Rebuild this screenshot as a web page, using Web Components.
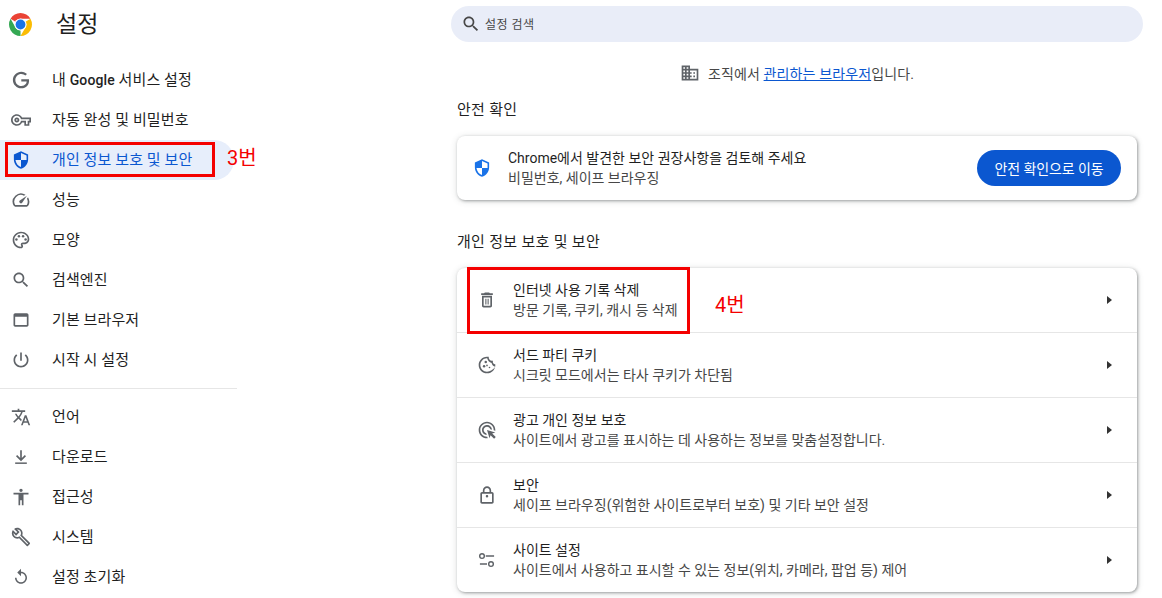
<!DOCTYPE html>
<html lang="ko">
<head>
<meta charset="utf-8">
<title>설정</title>
<style>
  html, body { margin: 0; padding: 0; background: #fff; }
  body { font-family: Roboto, "Noto Sans CJK KR", sans-serif; color: #1f1f1f; overflow: hidden; }
</style>
</head>
<body>
<settings-page>
  <settings-nav slot="nav">
    <nav-item icon="google">내 <span style="font-size:14px;font-weight:500">Google</span> 서비스 설정</nav-item>
    <nav-item icon="key">자동 완성 및 비밀번호</nav-item>
    <nav-item icon="shield" selected>개인 정보 보호 및 보안</nav-item>
    <nav-item icon="speed">성능</nav-item>
    <nav-item icon="palette">모양</nav-item>
    <nav-item icon="search">검색엔진</nav-item>
    <nav-item icon="browser">기본 브라우저</nav-item>
    <nav-item icon="power">시작 시 설정</nav-item>
    <nav-sep></nav-sep>
    <nav-item icon="translate">언어</nav-item>
    <nav-item icon="download">다운로드</nav-item>
    <nav-item icon="accessibility">접근성</nav-item>
    <nav-item icon="wrench">시스템</nav-item>
    <nav-item icon="restore">설정 초기화</nav-item>
  </settings-nav>

  <search-box placeholder="설정 검색"></search-box>
  <managed-note>조직에서 <a href="#" style="color:#0b57d0">관리하는 브라우저</a>입니다.</managed-note>

  <section-title style="--title-top:16px">안전 확인</section-title>
  <settings-card>
    <safety-row title="Chrome에서 발견한 보안 권장사항을 검토해 주세요" sub="비밀번호, 세이프 브라우징" action="안전 확인으로 이동"></safety-row>
  </settings-card>

  <section-title style="--title-top:32px">개인 정보 보호 및 보안</section-title>
  <settings-card>
    <link-row icon="trash" title="인터넷 사용 기록 삭제" sub="방문 기록, 쿠키, 캐시 등 삭제"></link-row>
    <link-row icon="cookie" title="서드 파티 쿠키" sub="시크릿 모드에서는 타사 쿠키가 차단됨"></link-row>
    <link-row icon="ads" title="광고 개인 정보 보호" sub="사이트에서 광고를 표시하는 데 사용하는 정보를 맞춤설정합니다."></link-row>
    <link-row icon="lock" title="보안" sub="세이프 브라우징(위험한 사이트로부터 보호) 및 기타 보안 설정"></link-row>
    <link-row icon="tune" title="사이트 설정" sub="사이트에서 사용하고 표시할 수 있는 정보(위치, 카메라, 팝업 등) 제어"></link-row>
  </settings-card>

  <red-mark slot="marks" label="3번" style="--x:5px;--y:142px;--w:210px;--h:35px;--lx:227px;--ly:144px"></red-mark>
  <red-mark slot="marks" label="4번" style="--x:467px;--y:267px;--w:223px;--h:67px;--lx:715px;--ly:291px"></red-mark>
</settings-page>

<script>
// icon paths, 24x24 material style
const ICONS = {
  google: '<path transform="translate(2 2) scale(.83)" d="M12.48 10.92v3.28h7.84c-.24 1.84-.853 3.187-1.787 4.133-1.147 1.147-2.933 2.4-6.053 2.4-4.827 0-8.6-3.893-8.6-8.72s3.773-8.72 8.6-8.72c2.6 0 4.507 1.027 5.907 2.347l2.307-2.307C18.747 1.44 16.133 0 12.48 0 5.867 0 .307 5.387.307 12s5.56 12 12.173 12c3.573 0 6.267-1.173 8.373-3.36 2.16-2.16 2.84-5.213 2.84-7.667 0-.76-.053-1.467-.173-2.053H12.48z"/>',
  key: '<path d="M22 19h-6v-4h-2.68c-1.14 2.42-3.6 4-6.32 4-3.86 0-7-3.14-7-7s3.14-7 7-7c2.72 0 5.17 1.58 6.32 4H24v6h-2v4zm-4-2h2v-4h2v-2H11.94l-.23-.67C11.01 8.34 9.11 7 7 7c-2.76 0-5 2.24-5 5s2.24 5 5 5c2.11 0 4.01-1.34 4.71-3.33l.23-.67H18v4zM7 15c-1.65 0-3-1.35-3-3s1.35-3 3-3 3 1.35 3 3-1.35 3-3 3zm0-4c-.55 0-1 .45-1 1s.45 1 1 1 1-.45 1-1-.45-1-1-1z"/>',
  shield: '<path transform="translate(23.4 .6) scale(-.95 .95)" d="M12 1 3 5v6c0 5.55 3.84 10.74 9 12 5.16-1.26 9-6.45 9-12V5l-9-4zm0 10.99h7c-.53 4.12-3.28 7.79-7 8.94V12H5V6.3l7-3.11v8.8z"/>',
  speed: '<path d="M20.38 8.57l-1.23 1.85a8 8 0 0 1-.22 7.58H5.07A8 8 0 0 1 15.58 6.85l1.85-1.23A10 10 0 0 0 3.35 19a2 2 0 0 0 1.72 1h13.85a2 2 0 0 0 1.74-1 10 10 0 0 0-.27-10.44zm-9.79 6.84a2 2 0 0 0 2.83 0l5.66-8.49-8.49 5.66a2 2 0 0 0 0 2.83z"/>',
  palette: '<path d="M12 22C6.49 22 2 17.51 2 12S6.49 2 12 2s10 4.04 10 9c0 3.31-2.69 6-6 6h-1.77c-.28 0-.5.22-.5.5 0 .12.05.23.13.33.41.47.64 1.06.64 1.67 0 1.38-1.12 2.5-2.5 2.5zm0-18c-4.41 0-8 3.59-8 8s3.59 8 8 8c.28 0 .5-.22.5-.5a.54.54 0 0 0-.14-.35c-.41-.46-.63-1.05-.63-1.65 0-1.38 1.12-2.5 2.5-2.5H16c2.21 0 4-1.79 4-4 0-3.86-3.59-7-8-7z"/><circle cx="6.5" cy="11.5" r="1.5"/><circle cx="9.5" cy="7.5" r="1.5"/><circle cx="14.5" cy="7.5" r="1.5"/><circle cx="17.5" cy="11.5" r="1.5"/>',
  search: '<path d="M15.5 14h-.79l-.28-.27C15.41 12.59 16 11.11 16 9.5 16 5.91 13.09 3 9.5 3S3 5.91 3 9.5 5.91 16 9.5 16c1.61 0 3.09-.59 4.23-1.57l.27.28v.79l5 4.99L20.49 19l-4.99-5zm-6 0C7.01 14 5 11.99 5 9.5S7.01 5 9.5 5 14 7.01 14 9.5 11.99 14 9.5 14z"/>',
  browser: '<path d="M19 4H5c-1.11 0-2 .9-2 2v12c0 1.1.89 2 2 2h14c1.1 0 2-.9 2-2V6c0-1.1-.89-2-2-2zm0 14H5V8h14v10z"/>',
  power: '<path d="M13 3h-2v10h2V3zm4.83 2.17l-1.42 1.42C17.99 7.86 19 9.81 19 12c0 3.87-3.13 7-7 7s-7-3.13-7-7c0-2.19 1.01-4.14 2.58-5.42L6.17 5.17C4.23 6.82 3 9.26 3 12c0 4.97 4.03 9 9 9s9-4.03 9-9c0-2.74-1.23-5.18-3.17-6.83z"/>',
  translate: '<path d="M12.87 15.07l-2.54-2.51.03-.03c1.74-1.94 2.98-4.17 3.71-6.53H17V4h-7V2H8v2H1v1.99h11.17C11.5 7.92 10.44 9.75 9 11.35 8.07 10.32 7.3 9.19 6.69 8h-2c.73 1.63 1.73 3.17 2.98 4.56l-5.09 5.02L4 19l5-5 3.11 3.11.76-2.04zM18.5 10h-2L12 22h2l1.12-3h4.75L21 22h2l-4.5-12zm-2.62 7l1.62-4.33L19.12 17h-3.24z"/>',
  download: '<path d="M11 4h2v9.2l3.6-3.6L18 11l-6 6-6-6 1.4-1.4 3.6 3.6z"/><path d="M5 18.5h14v1.8H5z"/>',
  accessibility: '<path d="M12 2c1.1 0 2 .9 2 2s-.9 2-2 2-2-.9-2-2 .9-2 2-2zm9 7h-6v13h-2v-6h-2v6H9V9H3V7h18v2z"/>',
  wrench: '<path d="M22.61 18.99l-9.08-9.08c.93-2.34.45-5.1-1.44-7C9.79.61 6.21.4 3.66 2.26L7.5 6.11 6.08 7.52 2.25 3.69C.39 6.23.6 9.82 2.9 12.11c1.86 1.86 4.57 2.35 6.89 1.48l9.11 9.11c.39.39 1.02.39 1.41 0l2.3-2.3c.4-.38.4-1.01 0-1.41zm-3 1.6l-9.46-9.46c-.61.45-1.29.72-2 .82-1.36.2-2.79-.21-3.83-1.25C3.37 9.76 2.93 8.5 3 7.26l3.09 3.09 4.24-4.24-3.09-3.09c1.24-.07 2.49.37 3.44 1.31 1.08 1.08 1.49 2.57 1.24 3.96-.12.71-.42 1.37-.88 1.96l9.45 9.45-.88.88z"/>',
  restore: '<path transform="translate(1.2 1.2) scale(.9)" d="M12 5V1L7 6l5 5V7c3.31 0 6 2.69 6 6s-2.69 6-6 6-6-2.69-6-6H4c0 4.42 3.58 8 8 8s8-3.58 8-8-3.58-8-8-8z"/>',
  domain: '<path d="M12 7V3H2v18h20V7H12zM6 19H4v-2h2v2zm0-4H4v-2h2v2zm0-4H4V9h2v2zm0-4H4V5h2v2zm4 12H8v-2h2v2zm0-4H8v-2h2v2zm0-4H8V9h2v2zm0-4H8V5h2v2zm10 12h-8v-2h2v-2h-2v-2h2v-2h-2V9h8v10zm-2-8h-2v2h2v-2zm0 4h-2v2h2v-2z"/>',
  trash: '<path d="M6 19c0 1.1.9 2 2 2h8c1.1 0 2-.9 2-2V7H6v12zM8 9h8v10H8V9zm7.5-5l-1-1h-5l-1 1H5v2h14V4z"/><path d="M10 10.5h1.3v7H10zM12.7 10.5H14v7h-1.3z"/>',
  cookie: '<path d="M21.95 10.99c-1.79-.03-3.7-1.95-2.68-4.22-2.98 1-5.77-1.59-5.19-4.56C6.95.71 2 6.58 2 12c0 5.52 4.48 10 10 10 5.89 0 10.54-5.08 9.95-11.01zM12 20c-4.41 0-8.08-3.59-7.99-8 .09-4.8 4.32-8.33 8.2-8 .55 2.73 2.58 5 5.33 5.55.37 2.31 2.01 3.89 4.45 4.44C19.27 17.34 16.09 20 12 20z"/><circle cx="10.5" cy="8.5" r="1.5"/><circle cx="8.5" cy="13.5" r="1.5"/><circle cx="15" cy="15" r="1"/><circle cx="12" cy="12.5" r="1"/>',
  ads: '<path d="M11.71 17.99C8.53 17.84 6 15.22 6 12c0-3.31 2.69-6 6-6 3.22 0 5.84 2.53 5.99 5.71l-2.1-.63C15.48 9.31 13.89 8 12 8c-2.21 0-4 1.79-4 4 0 1.89 1.31 3.48 3.08 3.89l.63 2.1zM22 12c0 .3-.01.6-.04.9l-1.97-.59c.01-.1.01-.21.01-.31 0-4.42-3.58-8-8-8s-8 3.58-8 8 3.58 8 8 8c.1 0 .21 0 .31-.01l.59 1.97c-.3.03-.6.04-.9.04-5.52 0-10-4.48-10-10S6.48 2 12 2s10 4.48 10 10zm-3.77 4.26L22 15l-10-3 3 10 1.26-3.77 4.27 4.27 1.98-1.98-4.28-4.26z"/>',
  lock: '<path d="M18 8h-1V6c0-2.76-2.24-5-5-5S7 3.24 7 6v2H6c-1.1 0-2 .9-2 2v10c0 1.1.9 2 2 2h12c1.1 0 2-.9 2-2V10c0-1.1-.9-2-2-2zM9 6c0-1.66 1.34-3 3-3s3 1.34 3 3v2H9V6zm9 14H6V10h12v10zm-6-5.5c.8 0 1.5-.7 1.5-1.5s-.7-1.5-1.5-1.5-1.5.7-1.5 1.5.7 1.5 1.5 1.5z" transform="translate(0 .5)"/>',
  tune: '<g fill="none" stroke="currentColor" stroke-width="1.7"><circle cx="6" cy="7.2" r="2.8"/><circle cx="16.8" cy="16.8" r="2.8"/><path d="M10.5 7.2h10M3.5 16.8h8.5"/></g>'
};

class CrIcon extends HTMLElement {
  static get observedAttributes() { return ['name']; }
  constructor() {
    super();
    this.attachShadow({ mode: 'open' });
  }
  connectedCallback() { this.render(); }
  attributeChangedCallback() { this.render(); }
  render() {
    this.shadowRoot.innerHTML = `
      <style>
        :host { display: block; width: 20px; height: 20px; flex: none; color: var(--icon-color, #5f6368); }
        svg { display: block; width: 100%; height: 100%; fill: currentColor; }
      </style>
      <svg viewBox="0 0 24 24">${ICONS[this.getAttribute('name')] || ''}</svg>`;
  }
}
customElements.define('cr-icon', CrIcon);

class SettingsPage extends HTMLElement {
  constructor() {
    super();
    this.attachShadow({ mode: 'open' }).innerHTML = `
      <style>
        :host { display: grid; grid-template-columns: 237px 1fr; height: 598px; position: relative; overflow: hidden; }
        main { display: flex; flex-direction: column; padding: 6px 25px 0 220px; min-width: 0; }
      </style>
      <slot name="nav"></slot>
      <main><slot></slot></main>
      <slot name="marks"></slot>`;
  }
}
customElements.define('settings-page', SettingsPage);

class SettingsNav extends HTMLElement {
  constructor() {
    super();
    this.attachShadow({ mode: 'open' }).innerHTML = `
      <style>
        :host { display: block; }
        header { display: flex; align-items: center; gap: 24px; height: 48px; padding: 0 0 12px 9px; }
        svg { width: 23px; height: 23px; display: block; }
        h1 { margin: 0; padding-top: 2px; font-size: 23px; font-weight: 400; line-height: 46px; letter-spacing: .2px; color: #1f1f1f; }
      </style>
      <header>
        <svg viewBox="4 4 40 40">
          <path fill="#ea4335" d="M6.68 14A20 20 0 0 1 41.32 14H24A10 10 0 0 0 15.34 19Z"/>
          <path fill="#fbbc04" d="M41.32 14A20 20 0 0 1 24 44L32.66 29A10 10 0 0 0 32.66 19Z"/>
          <path fill="#34a853" d="M24 44A20 20 0 0 1 6.68 14L15.34 29A10 10 0 0 0 24 34Z"/>
          <circle cx="24" cy="24" r="10.5" fill="#fff"/>
          <circle cx="24" cy="24" r="8.5" fill="#1a73e8"/>
        </svg>
        <h1>설정</h1>
      </header>
      <slot></slot>`;
  }
}
customElements.define('settings-nav', SettingsNav);

class NavItem extends HTMLElement {
  constructor() {
    super();
    this.attachShadow({ mode: 'open' });
  }
  connectedCallback() {
    this.shadowRoot.innerHTML = `
      <style>
        :host { display: flex; align-items: center; gap: 21px; height: 40px; padding-left: 11px; margin-right: 3px;
          font-size: 15px; letter-spacing: .1px; color: #1f1f1f; border-radius: 0 20px 20px 0; }
        :host([selected]) { background: #e7eefb; color: #0b57d0; --icon-color: #0b57d0; }
        .label { padding-bottom: 4px; }
      </style>
      <cr-icon name="${this.getAttribute('icon')}"></cr-icon>
      <div class="label"><slot></slot></div>`;
  }
}
customElements.define('nav-item', NavItem);

class NavSep extends HTMLElement {
  constructor() {
    super();
    this.attachShadow({ mode: 'open' }).innerHTML = `
      <style>:host { display: block; height: 1px; margin: 8px 0; background: #e6e6e6; }</style>`;
  }
}
customElements.define('nav-sep', NavSep);

class SearchBox extends HTMLElement {
  constructor() {
    super();
    this.attachShadow({ mode: 'open' });
  }
  connectedCallback() {
    this.shadowRoot.innerHTML = `
      <style>
        :host { display: flex; align-items: center; gap: 4px; height: 36px; margin: 0 -6px; padding-left: 10px; border-radius: 18px;
          background: #e9edf8; color: #474747; font-size: 12px; letter-spacing: .5px; --icon-color: #474747; }
        .hint { padding-bottom: 2px; }
      </style>
      <cr-icon name="search"></cr-icon>
      <div class="hint">${this.getAttribute('placeholder')}</div>`;
  }
}
customElements.define('search-box', SearchBox);

class ManagedNote extends HTMLElement {
  constructor() {
    super();
    this.attachShadow({ mode: 'open' }).innerHTML = `
      <style>
        :host { display: flex; justify-content: center; align-items: center; gap: 8px; height: 22px; margin-top: 20px;
          font-size: 14px; letter-spacing: .12px; color: #474747; }
      </style>
      <cr-icon name="domain"></cr-icon>
      <span><slot></slot></span>`;
  }
}
customElements.define('managed-note', ManagedNote);

class SectionTitle extends HTMLElement {
  constructor() {
    super();
    this.attachShadow({ mode: 'open' }).innerHTML = `
      <style>
        :host { display: block; height: 20px; margin: var(--title-top, 24px) 0 16px; line-height: 20px;
          font-size: 15px; letter-spacing: .3px; color: #1f1f1f; }
      </style>
      <slot></slot>`;
  }
}
customElements.define('section-title', SectionTitle);

class SettingsCard extends HTMLElement {
  constructor() {
    super();
    this.attachShadow({ mode: 'open' }).innerHTML = `
      <style>
        :host { display: block; background: #fff; border-radius: 8px;
          box-shadow: 1px 1px 3px rgba(60,64,67,.45), 0 1px 6px 1px rgba(60,64,67,.12); }
      </style>
      <slot></slot>`;
  }
}
customElements.define('settings-card', SettingsCard);

const ROW_TEXT_CSS = `
  .text { display: flex; flex-direction: column; gap: 2px; min-width: 0; flex: 1; }
  .title { font-size: 14px; line-height: 18px; color: #1f1f1f; }
  .sub { font-size: 14px; line-height: 18px; color: #474747; }
`;

class SafetyRow extends HTMLElement {
  constructor() {
    super();
    this.attachShadow({ mode: 'open' });
  }
  connectedCallback() {
    this.shadowRoot.innerHTML = `
      <style>
        :host { display: flex; align-items: center; height: 64px; padding: 0 16px 0 15px; gap: 16px; --icon-color: #1a73e8; }
        ${ROW_TEXT_CSS}
        button { all: unset; box-sizing: border-box; display: flex; align-items: center; justify-content: center; width: 144px; height: 36px;
          border-radius: 18px; background: #0b57d0; color: #fff; font-size: 14px; letter-spacing: -.1px; }
      </style>
      <cr-icon name="shield"></cr-icon>
      <div class="text">
        <div class="title">${this.getAttribute('title')}</div>
        <div class="sub">${this.getAttribute('sub')}</div>
      </div>
      <button>${this.getAttribute('action')}</button>`;
  }
}
customElements.define('safety-row', SafetyRow);

class LinkRow extends HTMLElement {
  constructor() {
    super();
    this.attachShadow({ mode: 'open' });
  }
  connectedCallback() {
    this.shadowRoot.innerHTML = `
      <style>
        :host { display: flex; align-items: center; height: 64px; padding: 0 25px 0 20px; gap: 16px; }
        :host(:not(:last-child)) { border-bottom: 1px solid #e6e6e6; }
        ${ROW_TEXT_CSS}
        svg.arrow { width: 5px; height: 8px; fill: #333; flex: none; }
      </style>
      <cr-icon name="${this.getAttribute('icon')}"></cr-icon>
      <div class="text">
        <div class="title">${this.getAttribute('title')}</div>
        <div class="sub">${this.getAttribute('sub')}</div>
      </div>
      <svg class="arrow" viewBox="0 0 5 8"><path d="M0 0l5 4-5 4z"/></svg>`;
  }
}
customElements.define('link-row', LinkRow);

// red box and label drawn over the screenshot
class RedMark extends HTMLElement {
  constructor() {
    super();
    this.attachShadow({ mode: 'open' });
  }
  connectedCallback() {
    this.shadowRoot.innerHTML = `
      <style>
        :host { display: contents; }
        .box { position: absolute; left: var(--x); top: var(--y); width: var(--w); height: var(--h); box-sizing: border-box; border: 3px solid #f40000; }
        .label { position: absolute; left: var(--lx); top: var(--ly); font-size: 20px; line-height: 28px; color: #f40000; }
      </style>
      <div class="box"></div>
      <div class="label">${this.getAttribute('label')}</div>`;
  }
}
customElements.define('red-mark', RedMark);
</script>
</body>
</html>
